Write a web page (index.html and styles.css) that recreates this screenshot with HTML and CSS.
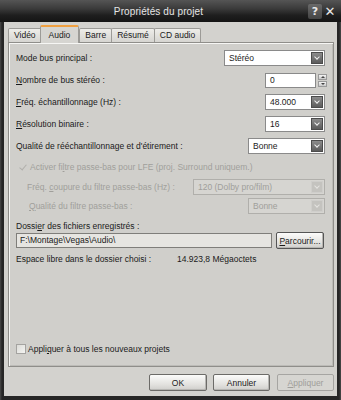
FILE: index.html
```html
<!DOCTYPE html>
<html lang="fr">

<head>
  <meta charset="UTF-8">
  <title>Propriétés du projet</title>
  <link rel="stylesheet" href="styles.css">
</head>

<body>
  <div class="window">
    <div class="titlebar">
      <span class="title">Propriétés du projet</span>
      <span class="tb-btn help">?</span>
      <span class="tb-btn close">✕</span>
    </div>

    <div class="client">
      <div class="tabs">
        <span class="tab">Vidéo</span>
        <span class="tab active">Audio</span>
        <span class="tab">Barre</span>
        <span class="tab">Résumé</span>
        <span class="tab">CD audio</span>
      </div>

      <div class="panel">
        <div class="row">
          <span class="label">Mode bus principal :</span>
          <div class="select w-mode"><span class="value">Stéréo</span><span class="arrow"></span></div>
        </div>
        <div class="row">
          <span class="label"><u>N</u>ombre de bus stéréo :</span>
          <div class="spin">
            <span class="field">0</span>
            <span class="spin-btns"><span class="up"></span><span class="down"></span></span>
          </div>
        </div>
        <div class="row">
          <span class="label"><u>F</u>réq. échantillonnage (Hz) :</span>
          <div class="select w-small"><span class="value">48.000</span><span class="arrow"></span></div>
        </div>
        <div class="row">
          <span class="label"><u>R</u>ésolution binaire :</span>
          <div class="select w-small"><span class="value">16</span><span class="arrow"></span></div>
        </div>
        <div class="row">
          <span class="label">Qualité de rééchantillonnage et d'étirement :</span>
          <div class="select w-mid"><span class="value">Bonne</span><span class="arrow"></span></div>
        </div>

        <div class="row check-row disabled">
          <span class="check checked"></span>
          <span class="label">Activer fi<u>l</u>tre passe-bas pour LFE (proj. Surround uniquem.)</span>
        </div>
        <div class="row sub disabled">
          <span class="label indent">Fréq. <u>c</u>oupure du filtre passe-bas (Hz) :</span>
          <div class="select w-wide"><span class="value">120 (Dolby pro/film)</span><span class="arrow"></span></div>
        </div>
        <div class="row sub disabled">
          <span class="label indent2"><u>Q</u>ualité du filtre passe-bas :</span>
          <div class="select w-mid"><span class="value">Bonne</span><span class="arrow"></span></div>
        </div>

        <div class="folder">
          <span class="label">Dossi<u>e</u>r des fichiers enregistrés :</span>
          <div class="folder-row">
            <span class="field path">F:\Montage\Vegas\Audio\</span>
            <button class="button browse"><u>P</u>arcourir...</button>
          </div>
        </div>

        <div class="space">
          <span class="label">Espace libre dans le dossier choisi :</span>
          <span class="space-value">14.923,8 Mégaoctets</span>
        </div>

        <div class="row check-row apply-all">
          <span class="check"></span>
          <span class="label">Appli<u>q</u>uer à tous les nouveaux projets</span>
        </div>
      </div>

      <div class="actions">
        <button class="button">OK</button>
        <button class="button">Annuler</button>
        <button class="button" disabled><u>A</u>ppliquer</button>
      </div>
    </div>
  </div>
</body>

</html>
```

FILE: styles.css
```css
* {
  box-sizing: border-box;
}

body {
  margin: 0;
  background-color: #1b1b1b;
  font-family: "Liberation Sans", Arial, sans-serif;
  font-size: 8.5px;
  color: #1a1a1a;
}

.window {
  width: 341px;
  height: 400px;
  padding: 0 4px 4px;
  background: linear-gradient(to right, #4a4a4a, #262626 2px, #262626 calc(100% - 2px), #4a4a4a);
}

.titlebar {
  display: flex;
  align-items: center;
  height: 22px;
  margin: 0 -4px;
  padding: 0 4px 0 6px;
  background: linear-gradient(#555, #3a3a3a 40%, #1e1e1e 70%, #141414);
}

.titlebar .title {
  flex: 1;
  text-align: center;
  padding-left: 4px;
  color: #e6e6e6;
  font-size: 10px;
  letter-spacing: .1px;
}

.tb-btn {
  display: flex;
  align-items: center;
  justify-content: center;
  width: 14px;
  height: 15px;
  margin-left: 1px;
  border-radius: 2px;
  color: #e8e8e8;
  font-family: "DejaVu Sans", sans-serif;
  font-weight: bold;
  font-size: 12px;
}

.tb-btn.help {
  background: linear-gradient(#6a6a6a, #444);
  font-size: 11px;
}

.tb-btn.close {
  font-size: 13px;
}

.client {
  height: 374px;
  padding: 3px 3px 0 4px;
  background-color: #d3d2ce;
}

/* onglets */
.tabs {
  display: flex;
  align-items: flex-end;
  height: 17px;
}

.tab {
  height: 14px;
  line-height: 13px;
  padding: 0 5px;
  margin-right: -1px;
  border: 1px solid #9c9b97;
  border-bottom: none;
  border-radius: 2px 2px 0 0;
  background: linear-gradient(#eeede9, #d6d5d1);
}

.tab:first-child {
  padding: 0 6px 0 5px;
}

.tab.active {
  position: relative;
  z-index: 1;
  height: 18px;
  margin: 0 -1px -1px -2px;
  padding: 2px 8px 0;
  border-top: 2px solid #f0a040;
  background: #d6d5d1;
}

.tab.active + .tab {
  margin-left: 1px;
}

.panel {
  display: flex;
  flex-direction: column;
  height: 325px;
  padding: 4px 8px 0 7px;
  border: 1px solid #8f8e8a;
  box-shadow: inset 1px 1px 0 #f6f6f4, inset -1px -1px 0 #bcbbb7;
  background-color: #d0cfcb;
}

.row {
  display: flex;
  align-items: center;
  height: 22px;
}

.row .select,
.row .spin {
  flex: 0 0 auto;
  margin-left: auto;
}

.select {
  display: flex;
  height: 16px;
  padding: 1px;
  border: 1px solid #8a8a8a;
  background-color: #fff;
}

.select .value {
  flex: 1;
  padding-left: 3px;
  line-height: 12px;
  white-space: nowrap;
}

.select .arrow {
  width: 12px;
  border: 1px solid #4c4c4c;
  background: linear-gradient(#8c8c8c, #5c5c5c);
  position: relative;
}

.select .arrow::after {
  content: '';
  position: absolute;
  left: 3px;
  top: 2px;
  width: 3px;
  height: 3px;
  border-right: 1.5px solid #f0f0f0;
  border-bottom: 1.5px solid #f0f0f0;
  transform: rotate(45deg);
}

.w-mode { width: 101px; }
.w-small { width: 60px; }
.w-mid { width: 77px; }
.w-wide { width: 132px; }

.spin {
  display: flex;
  align-items: center;
  margin-right: -2px;
}

.field {
  display: block;
  height: 15px;
  padding: 0 4px;
  line-height: 13px;
  border: 1px solid #8a8a8a;
  background-color: #fff;
}

.spin .field {
  width: 51px;
}

.spin-btns {
  display: flex;
  flex-direction: column;
  gap: 1px;
  margin-left: 2px;
}

.spin-btns span {
  position: relative;
  width: 9px;
  height: 6px;
  border: 1px solid #9a9a9a;
  background: linear-gradient(#f4f4f4, #c8c8c8);
}

.spin-btns span::after {
  content: '';
  position: absolute;
  left: 2px;
  top: 1px;
  width: 0;
  height: 0;
  border-left: 2px solid transparent;
  border-right: 2px solid transparent;
}

.spin-btns .up::after {
  border-bottom: 2px solid #444;
}

.spin-btns .down::after {
  border-top: 2px solid #444;
}

/* zone désactivée */
.disabled {
  color: #a09f9b;
}

.disabled .select {
  border-color: #b0afab;
  background-color: #d6d5d1;
}

.disabled .select .arrow {
  border-color: #cfcecb;
  background: #c4c3bf;
}

.disabled .select .arrow::after {
  border-color: #e4e3e0;
}

.check-row {
  height: 20px;
}

.sub {
  height: 19px;
}

.indent { padding-left: 11px; }
.indent2 { padding-left: 13px; }

.check {
  position: relative;
  flex-shrink: 0;
  width: 10px;
  height: 10px;
  margin-right: 2px;
  border: 1px solid #a4a3a0;
  background: linear-gradient(135deg, #dcdbd7, #f4f4f2);
}

.disabled .check {
  margin-left: 2px;
  border-color: transparent;
  background: none;
}

.check.checked::after {
  content: '';
  position: absolute;
  left: 2px;
  top: 0;
  width: 3px;
  height: 6px;
  border-right: 1.5px solid #b0afab;
  border-bottom: 1.5px solid #b0afab;
  transform: rotate(40deg);
}

.folder {
  display: flex;
  flex-direction: column;
  margin-top: 5px;
}

.folder .label {
  line-height: 12px;
}

.folder-row {
  display: flex;
  align-items: center;
  gap: 4px;
  height: 17px;
}

.folder-row .path {
  width: 256px;
  padding-left: 3px;
  border-color: #7f7e7a;
  background-color: #e6e5e1;
}

.button {
  font-family: inherit;
  font-size: inherit;
  color: #1a1a1a;
  padding: 0;
  border: 1px solid #555;
  border-radius: 2px;
  background: linear-gradient(#fbfbfa, #e4e3e0 60%, #cfcecb);
  box-shadow: inset -1px -1px 0 #b6b5b2;
}

.button.browse {
  width: 48px;
  height: 17px;
}

.space {
  display: flex;
  align-items: center;
  height: 14px;
  margin-top: 3px;
}

.space .label {
  width: 161px;
}

.apply-all {
  margin-top: auto;
  margin-bottom: 7px;
}

.actions {
  display: flex;
  justify-content: flex-end;
  gap: 7px;
  margin-top: 7px;
}

.actions .button {
  width: 57px;
  height: 17px;
  border-color: #6c6b68;
}

.actions .button:first-child {
  width: 58px;
  margin-right: -1px;
}

.actions .button:disabled {
  color: #9f9e9a;
  border-color: #a6a5a2;
  background: #d6d5d1;
  box-shadow: none;
}
```
